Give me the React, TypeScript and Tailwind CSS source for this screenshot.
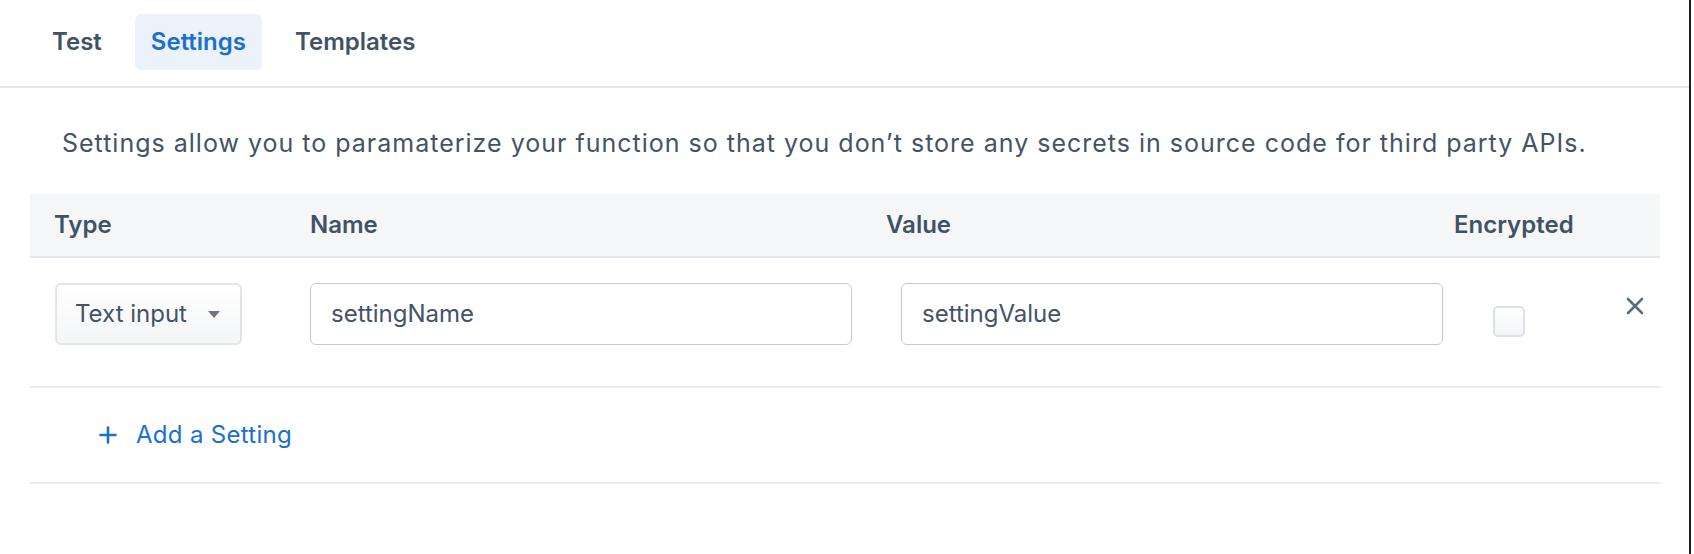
import { useState } from 'react';

const tabs = ['Test', 'Settings', 'Templates'];

const CloseIcon = () => (
  <svg width="18" height="18" viewBox="0 0 18 18" fill="none">
    <path d="M2 2L16 16M16 2L2 16" stroke="#5b6c7e" strokeWidth="2.6" strokeLinecap="round" />
  </svg>
);

const PlusIcon = () => (
  <svg width="18" height="18" viewBox="0 0 18 18" fill="none">
    <path d="M9 1.5V16.5M1.5 9H16.5" stroke="#1a6fcf" strokeWidth="2.6" strokeLinecap="round" />
  </svg>
);

const App = () => {
  const [active, setActive] = useState('Settings');
  const [encrypted, setEncrypted] = useState(false);

  return (
    <div className="w-[1694px] h-[554px] bg-white font-['Inter','Noto_Sans',sans-serif] text-[#425466]">
      <div className="w-[1691px] h-full border-r-2 border-[#1c1c1c]">
        {/* Tabs */}
        <div className="h-[88px] border-b-2 border-[#e4e8ee] flex items-start gap-[17px] pt-[14px] pl-[36px]">
          {tabs.map((t) => (
            <button
              key={t}
              onClick={() => setActive(t)}
              className={
                active === t
                  ? 'h-[56px] px-4 rounded-md flex items-center text-[24px] font-semibold text-[#1a6fcf] bg-[#ebf2fb]'
                  : 'h-[56px] px-4 rounded-md flex items-center text-[24px] font-semibold text-[#3f5266]'
              }
            >
              {t}
            </button>
          ))}
        </div>

        <div className="px-[30px]">
          <p className="pt-[39px] pb-[35px] pl-[32px] text-[25px] leading-[32px] tracking-[1px] text-[#425466]">
            Settings allow you to paramaterize your function so that you don’t store any secrets in source code for third party APIs.
          </p>

          {/* Table header */}
          <div className="w-[1630px] h-[64px] bg-[#f5f6f8] border-b-2 border-[#e4e8ee] flex items-center pl-[24px] text-[24px] font-semibold text-[#3f5266]">
            <div className="w-[256px]">Type</div>
            <div className="w-[576px]">Name</div>
            <div className="w-[568px]">Value</div>
            <div>Encrypted</div>
          </div>

          {/* Setting row */}
          <div className="w-[1630px] h-[130px] border-b-2 border-[#e8ecf0] flex items-start pl-[25px] pt-[25px]">
            <div className="w-[255px]">
              <div className="w-[187px] h-[62px] rounded-[6px] border-2 border-[#e1e4e8] bg-gradient-to-b from-white to-[#f4f5f7] flex items-center justify-between pl-[18px] pr-[20px] text-[24px] text-[#425466]">
                <span>Text input</span>
                <svg width="12" height="7" viewBox="0 0 12 7">
                  <path d="M0 0H12L6 7Z" fill="#6b7785" />
                </svg>
              </div>
            </div>
            <div className="w-[591px]">
              <div className="w-[542px] h-[62px] rounded-[6px] border-[1.5px] border-[#c4cad2] flex items-center pl-[20px] text-[24px] text-[#425466]">
                settingName
              </div>
            </div>
            <div className="w-[592px]">
              <div className="w-[542px] h-[62px] rounded-[6px] border-[1.5px] border-[#c4cad2] flex items-center pl-[20px] text-[24px] text-[#425466]">
                settingValue
              </div>
            </div>
            <div className="w-[133px] pt-[23px]">
              <button
                onClick={() => setEncrypted(!encrypted)}
                className="w-[32px] h-[31px] rounded-[5px] border-2 border-[#dde1e6] bg-gradient-to-b from-white to-[#f2f4f6] block"
              />
            </div>
            <div className="pt-[14px]">
              <CloseIcon />
            </div>
          </div>

          {/* Add row */}
          <div className="w-[1630px] h-[96px] border-b-2 border-[#e8ecf0] flex items-center pl-[69px] gap-[19px] text-[24px] tracking-[0.3px] text-[#1a6fcf]">
            <PlusIcon />
            <span>Add a Setting</span>
          </div>
        </div>
      </div>
    </div>
  );
};

export default App;
